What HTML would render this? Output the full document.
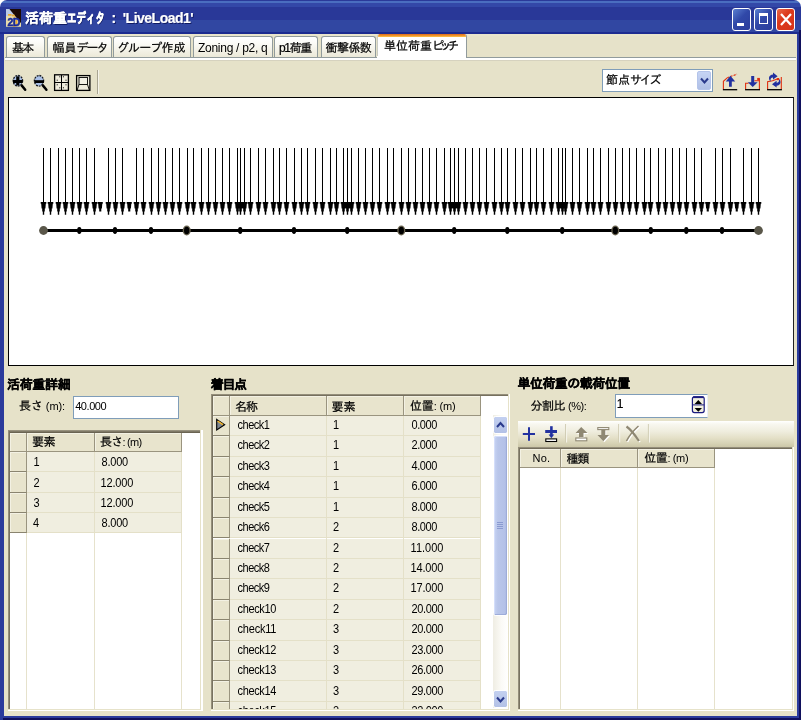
<!DOCTYPE html><html lang="ja"><head><meta charset="utf-8"><title>活荷重エディタ</title><style>
html,body{margin:0;padding:0;}
body{width:801px;height:720px;overflow:hidden;background:#fff;font-family:"Liberation Sans","IPAGothic","Noto Sans CJK JP",sans-serif;font-size:12px;color:#000;}
#w{position:absolute;left:0;top:0;width:801px;height:720px;overflow:hidden;background:#e6e2c9;}
.a{position:absolute;}
.t{position:absolute;white-space:nowrap;line-height:14px;height:14px;-webkit-text-stroke:0.22px currentColor;}
.b{font-weight:bold;-webkit-text-stroke:0.2px currentColor;}
.l{font-size:11px;-webkit-text-stroke:0;}
.lr{transform:scaleY(1.12);}
.tab{position:absolute;top:36px;height:21px;box-sizing:border-box;border:1px solid #919b9c;border-bottom:none;border-radius:3px 3px 0 0;background:linear-gradient(#ffffff 0%,#fbfbf7 30%,#ece9d8 100%);}
.hd{position:absolute;box-sizing:border-box;background:#e8e4cd;border-right:1px solid #9a947f;border-bottom:1px solid #9a947f;box-shadow:inset 1px 1px 0 #f3f1e3;}
.cell{position:absolute;box-sizing:border-box;background:#f0eee0;border-right:1px solid #e4e0c8;border-bottom:1px solid #e4e0c8;}
.rh{position:absolute;box-sizing:border-box;background:#e8e4cd;border-right:1px solid #9a947f;border-bottom:1px solid #8a846f;box-shadow:inset 1px 1px 0 #f3f1e3;}
.vl{position:absolute;width:1px;background:#e6e2cc;}
</style></head><body><div id="w">
<div class="a" style="left:0;top:0;width:801px;height:8px;background:#fff"></div>
<div class="a" id="tb" style="left:0;top:0;width:801px;height:34px;border-radius:7px 7px 0 0;background:linear-gradient(#2a3a9a 0,#2a3a9a 1px,#4a6ec0 1px,#4a6ec0 3px,#3348a8 3px,#3348a8 7px,#293898 7px,#293898 20px,#3147a2 20px,#3147a2 32px,#1c2b90 32px);"></div>
<div class="a" style="left:0;top:34px;width:4px;height:686px;background:#2b3b9c"></div>
<div class="a" style="left:797px;top:34px;width:4px;height:686px;background:#2b3b9c"></div>
<div class="a" style="left:0;top:716px;width:801px;height:4px;background:#2b3b9c"></div>
<div class="a" style="left:799.2px;top:30px;width:2px;height:690px;background:#10105c"></div>
<div class="a" style="left:3px;top:718.1px;width:798px;height:2px;background:#10105c"></div>
<svg class="a" style="left:6px;top:9px" width="15" height="18" viewBox="0 0 15 18"><rect width="15" height="17.8" fill="#e7dcab"/><polygon points="0,0 4,0 8.5,5.5 6,7 0,7" fill="#b9c8e6"/><polygon points="3.4,0 15,0 15,14.2" fill="#1c0a06"/><rect x="2" y="5" width="3.6" height="1.7" fill="#f0ac28"/><rect x="6" y="5.6" width="2.6" height="1.7" fill="#f0ac28"/><rect x="8" y="7.6" width="1.2" height="1.2" fill="#f0ac28"/><rect x="9.6" y="11" width="1.7" height="4.4" fill="#f0ac28"/><rect x="7" y="16.6" width="2.5" height="1.2" fill="#f0ac28"/></svg>
<div class="a" style="left:731.5px;top:7.5px;width:19px;height:23px;box-sizing:border-box;border:1px solid #fff;border-radius:3px;background:linear-gradient(135deg,#5a7fd0 0%,#3048a8 45%,#2b3d9c 100%)"><div class="a" style="left:4px;top:14px;width:7px;height:3px;background:#fff"></div></div>
<div class="a" style="left:753.5px;top:7.5px;width:19px;height:23px;box-sizing:border-box;border:1px solid #fff;border-radius:3px;background:linear-gradient(135deg,#5a7fd0 0%,#3048a8 45%,#2b3d9c 100%)"><div class="a" style="left:4px;top:4px;width:9px;height:11px;box-sizing:border-box;border:1px solid #fff;border-top:3px solid #fff"></div></div>
<div class="a" style="left:775.5px;top:7.5px;width:19px;height:23px;box-sizing:border-box;border:1px solid #fff;border-radius:3px;background:linear-gradient(135deg,#e8694a 0%,#dc3a1c 40%,#d6341a 100%)"><svg class="a" style="left:2px;top:3px" width="14" height="15" viewBox="0 0 14 15"><path d="M2 2 L12 13 M12 2 L2 13" stroke="#fff" stroke-width="2.2" fill="none"/></svg></div>
<div class="a" style="left:4px;top:34px;width:793px;height:1.5px;background:#e9e5cc"></div>
<div class="a" style="left:5px;top:56.5px;width:791px;height:1px;background:#919b9c"></div>
<div class="a" style="left:5px;top:57.5px;width:791px;height:2px;background:#fff"></div>
<div class="a" style="left:5px;top:59.5px;width:791px;height:1px;background:#d6d2bf"></div>
<div class="tab" style="left:6px;width:38.5px"></div>
<div class="tab" style="left:46.5px;width:65.0px"></div>
<div class="tab" style="left:113px;width:77.5px"></div>
<div class="tab" style="left:192.5px;width:80.0px"></div>
<div class="tab" style="left:274px;width:44px"></div>
<div class="tab" style="left:320.5px;width:55.5px"></div>
<div class="a" style="left:376.5px;top:33.5px;width:90.3px;height:23.2px;box-sizing:border-box;border-right:1px solid #919b9c;border-left:1px solid #c9ccc4;border-radius:2.5px 2.5px 0 0;background:#fff;overflow:hidden"><div class="a" style="left:-1px;top:0;width:92px;height:3px;background:linear-gradient(#dc6a1e 0%,#ec8c28 45%,#fcc848 100%)"></div></div><div class="a" style="left:377.2px;top:56.2px;width:88.8px;height:2px;background:#fff"></div>
<svg class="a" style="left:0;top:60px" width="110" height="40" viewBox="0 60 110 40"><path d="M21.6 85.4 L25.2 89.8" stroke="#000" stroke-width="2.5" stroke-linecap="round"/><ellipse cx="17.9" cy="80.8" rx="4.7" ry="5.3" fill="#a8bfe6" stroke="#15181f" stroke-width="1.3" stroke-dasharray="2 0.9"/><rect x="13" y="80" width="9.4" height="3" fill="#000"/><rect x="16.2" y="76.4" width="3.2" height="9" fill="#000"/><path d="M42.8 85.4 L46.4 89.8" stroke="#000" stroke-width="2.5" stroke-linecap="round"/><ellipse cx="39" cy="80.8" rx="4.6" ry="5.3" fill="#a8bfe6" stroke="#15181f" stroke-width="1.3" stroke-dasharray="2 0.9"/><rect x="34.4" y="80.2" width="9.5" height="2.8" fill="#000"/><rect x="54.6" y="74.8" width="13.8" height="15.6" fill="#efecdd" stroke="#000" stroke-width="1.3"/><path d="M61.5 75 V90 M55 82.5 H68.5" stroke="#000" stroke-width="1"/><rect x="59.3" y="76.3" width="1" height="1" fill="#000"/><rect x="62.9" y="76.3" width="1" height="1" fill="#000"/><rect x="56.7" y="79.7" width="1" height="1" fill="#000"/><rect x="65.5" y="79.7" width="1" height="1" fill="#000"/><rect x="56.7" y="84.3" width="1" height="1" fill="#000"/><rect x="65.5" y="84.3" width="1" height="1" fill="#000"/><rect x="59.3" y="87.3" width="1" height="1" fill="#000"/><rect x="62.9" y="87.3" width="1" height="1" fill="#000"/><rect x="76.6" y="75.6" width="13.3" height="14.8" fill="#efecdd" stroke="#000" stroke-width="1.3"/><rect x="79" y="77.5" width="8.5" height="7" fill="#f2f0e4" stroke="#000" stroke-width="0.9"/><path d="M79 84.5 L77.2 90 M87.5 84.5 L89.3 90" stroke="#000" stroke-width="0.9"/><path d="M97.5 70 V94" stroke="#a9a592" stroke-width="1"/><path d="M98.5 70 V94" stroke="#f6f4ea" stroke-width="1"/></svg>
<div class="a" style="left:602px;top:69px;width:111px;height:23px;box-sizing:border-box;border:1px solid #7f9db9;background:#fff"></div>
<div class="a" style="left:696.5px;top:71px;width:14.5px;height:19px;box-sizing:border-box;border:1px solid #b4c4ea;border-radius:2px;background:linear-gradient(#c6d4f4,#b0c0e6)"><svg class="a" style="left:2px;top:5px" width="9" height="8" viewBox="0 0 9 8"><path d="M1 1.5 L4.5 5.5 L8 1.5" stroke="#2a3a8c" stroke-width="2" fill="none"/></svg></div>
<svg class="a" style="left:716px;top:66px" width="74" height="30" viewBox="716 66 74 30"><path d="M723.4 89.4 V81.3 L727.2 77.8" stroke="#e03010" stroke-width="1.1" fill="none"/><path d="M727.2 77.8 L737 74.1" stroke="#e03010" stroke-width="1.1" stroke-dasharray="2.2 1.2" fill="none"/><path d="M730.4 75.8 L735.2 81.4 H731.8 V86.8 H729 V81.4 H725.8 Z" fill="#2231a0"/><path d="M722.9 89.7 H737.2" stroke="#000" stroke-width="1.3"/><path d="M745.6 89.4 V83.2 H748.6 M754.4 80.8 H759.4 M759.4 78.4 V89.4" stroke="#e03010" stroke-width="1.1" fill="none"/><rect x="757.2" y="77.9" width="2.6" height="2.4" fill="#e03010"/><path d="M751.2 76 H754.2 V82.2 H757.7 L752.7 87 L747.8 82.2 H751.2 Z" fill="#2231a0"/><path d="M745.1 89.7 H760" stroke="#000" stroke-width="1.3"/><path d="M767.6 89.4 V81.8 L772.5 80.8 L775.2 79.8 L778 78.8 M781.3 77.1 V89.4" stroke="#e03010" stroke-width="1.1" fill="none"/><rect x="776.8" y="78" width="2.4" height="2.2" fill="#e03010"/><path d="M773 72.6 L777.6 76.2 L773 79.6 V77.6 C771 77.6 770.2 79.2 770.6 81.4 C768 79.4 768.4 74.9 773 74.6 Z" fill="#2231a0"/><path d="M776.6 87.6 L772 84.2 L776.6 80.8 V82.8 C778.6 82.8 779.4 81.2 779 79 C781.4 81 781.2 85.4 776.6 85.7 Z" fill="#2231a0"/><path d="M767.1 89.7 H781.9" stroke="#000" stroke-width="1.3"/></svg>
<div class="a" style="left:8px;top:97px;width:786px;height:268.5px;box-sizing:border-box;border:1px solid #000;border-right-color:#222;background:#fff"></div>
<svg class="a" style="left:0;top:0" width="801" height="720" viewBox="0 0 801 720"><path d="M43 148h1v53.9h2.3v1.9h-.5l-.4 4.7h-.6v3.1h-.6v3.2h-1.4v-3.2h-.6v-3.1h-.6l-.4 -4.7h-.5v-1.9h2.3zM50 148h1v53.9h2.3v1.9h-.5l-.4 4.7h-.6v3.1h-.6v3.2h-1.4v-3.2h-.6v-3.1h-.6l-.4 -4.7h-.5v-1.9h2.3zM58 148h1v53.9h2.3v1.9h-.5l-.4 4.7h-.6v3.1h-.6v3.2h-1.4v-3.2h-.6v-3.1h-.6l-.4 -4.7h-.5v-1.9h2.3zM65 148h1v53.9h2.3v1.9h-.5l-.4 4.7h-.6v3.1h-.6v3.2h-1.4v-3.2h-.6v-3.1h-.6l-.4 -4.7h-.5v-1.9h2.3zM72 148h1v53.9h2.3v1.9h-.5l-.4 4.7h-.6v3.1h-.6v3.2h-1.4v-3.2h-.6v-3.1h-.6l-.4 -4.7h-.5v-1.9h2.3zM79 148h1v53.9h2.3v1.9h-.5l-.4 4.7h-.6v3.1h-.6v3.2h-1.4v-3.2h-.6v-3.1h-.6l-.4 -4.7h-.5v-1.9h2.3zM86 148h1v53.9h2.3v1.9h-.5l-.4 4.7h-.6v3.1h-.6v3.2h-1.4v-3.2h-.6v-3.1h-.6l-.4 -4.7h-.5v-1.9h2.3zM94 148h1v53.9h2.3v1.9h-.5l-.4 4.7h-.6v3.1h-.6v3.2h-1.4v-3.2h-.6v-3.1h-.6l-.4 -4.7h-.5v-1.9h2.3zM108 148h1v53.9h2.3v1.9h-.5l-.4 4.7h-.6v3.1h-.6v3.2h-1.4v-3.2h-.6v-3.1h-.6l-.4 -4.7h-.5v-1.9h2.3zM115 148h1v53.9h2.3v1.9h-.5l-.4 4.7h-.6v3.1h-.6v3.2h-1.4v-3.2h-.6v-3.1h-.6l-.4 -4.7h-.5v-1.9h2.3zM122 148h1v53.9h2.3v1.9h-.5l-.4 4.7h-.6v3.1h-.6v3.2h-1.4v-3.2h-.6v-3.1h-.6l-.4 -4.7h-.5v-1.9h2.3zM136 148h1v53.9h2.3v1.9h-.5l-.4 4.7h-.6v3.1h-.6v3.2h-1.4v-3.2h-.6v-3.1h-.6l-.4 -4.7h-.5v-1.9h2.3zM143 148h1v53.9h2.3v1.9h-.5l-.4 4.7h-.6v3.1h-.6v3.2h-1.4v-3.2h-.6v-3.1h-.6l-.4 -4.7h-.5v-1.9h2.3zM151 148h1v53.9h2.3v1.9h-.5l-.4 4.7h-.6v3.1h-.6v3.2h-1.4v-3.2h-.6v-3.1h-.6l-.4 -4.7h-.5v-1.9h2.3zM158 148h1v53.9h2.3v1.9h-.5l-.4 4.7h-.6v3.1h-.6v3.2h-1.4v-3.2h-.6v-3.1h-.6l-.4 -4.7h-.5v-1.9h2.3zM165 148h1v53.9h2.3v1.9h-.5l-.4 4.7h-.6v3.1h-.6v3.2h-1.4v-3.2h-.6v-3.1h-.6l-.4 -4.7h-.5v-1.9h2.3zM172 148h1v53.9h2.3v1.9h-.5l-.4 4.7h-.6v3.1h-.6v3.2h-1.4v-3.2h-.6v-3.1h-.6l-.4 -4.7h-.5v-1.9h2.3zM179 148h1v53.9h2.3v1.9h-.5l-.4 4.7h-.6v3.1h-.6v3.2h-1.4v-3.2h-.6v-3.1h-.6l-.4 -4.7h-.5v-1.9h2.3zM187 148h1v53.9h2.3v1.9h-.5l-.4 4.7h-.6v3.1h-.6v3.2h-1.4v-3.2h-.6v-3.1h-.6l-.4 -4.7h-.5v-1.9h2.3zM193 148h1v53.9h2.3v1.9h-.5l-.4 4.7h-.6v3.1h-.6v3.2h-1.4v-3.2h-.6v-3.1h-.6l-.4 -4.7h-.5v-1.9h2.3zM201 148h1v53.9h2.3v1.9h-.5l-.4 4.7h-.6v3.1h-.6v3.2h-1.4v-3.2h-.6v-3.1h-.6l-.4 -4.7h-.5v-1.9h2.3zM208 148h1v53.9h2.3v1.9h-.5l-.4 4.7h-.6v3.1h-.6v3.2h-1.4v-3.2h-.6v-3.1h-.6l-.4 -4.7h-.5v-1.9h2.3zM215 148h1v53.9h2.3v1.9h-.5l-.4 4.7h-.6v3.1h-.6v3.2h-1.4v-3.2h-.6v-3.1h-.6l-.4 -4.7h-.5v-1.9h2.3zM222 148h1v53.9h2.3v1.9h-.5l-.4 4.7h-.6v3.1h-.6v3.2h-1.4v-3.2h-.6v-3.1h-.6l-.4 -4.7h-.5v-1.9h2.3zM229 148h1v53.9h2.3v1.9h-.5l-.4 4.7h-.6v3.1h-.6v3.2h-1.4v-3.2h-.6v-3.1h-.6l-.4 -4.7h-.5v-1.9h2.3zM237 148h1v53.9h2.3v1.9h-.5l-.4 4.7h-.6v3.1h-.6v3.2h-1.4v-3.2h-.6v-3.1h-.6l-.4 -4.7h-.5v-1.9h2.3zM240 148h1v53.9h2.3v1.9h-.5l-.4 4.7h-.6v3.1h-.6v3.2h-1.4v-3.2h-.6v-3.1h-.6l-.4 -4.7h-.5v-1.9h2.3zM244 148h1v53.9h2.3v1.9h-.5l-.4 4.7h-.6v3.1h-.6v3.2h-1.4v-3.2h-.6v-3.1h-.6l-.4 -4.7h-.5v-1.9h2.3zM250 148h1v53.9h2.3v1.9h-.5l-.4 4.7h-.6v3.1h-.6v3.2h-1.4v-3.2h-.6v-3.1h-.6l-.4 -4.7h-.5v-1.9h2.3zM258 148h1v53.9h2.3v1.9h-.5l-.4 4.7h-.6v3.1h-.6v3.2h-1.4v-3.2h-.6v-3.1h-.6l-.4 -4.7h-.5v-1.9h2.3zM265 148h1v53.9h2.3v1.9h-.5l-.4 4.7h-.6v3.1h-.6v3.2h-1.4v-3.2h-.6v-3.1h-.6l-.4 -4.7h-.5v-1.9h2.3zM273 148h1v53.9h2.3v1.9h-.5l-.4 4.7h-.6v3.1h-.6v3.2h-1.4v-3.2h-.6v-3.1h-.6l-.4 -4.7h-.5v-1.9h2.3zM279 148h1v53.9h2.3v1.9h-.5l-.4 4.7h-.6v3.1h-.6v3.2h-1.4v-3.2h-.6v-3.1h-.6l-.4 -4.7h-.5v-1.9h2.3zM286 148h1v53.9h2.3v1.9h-.5l-.4 4.7h-.6v3.1h-.6v3.2h-1.4v-3.2h-.6v-3.1h-.6l-.4 -4.7h-.5v-1.9h2.3zM294 148h1v53.9h2.3v1.9h-.5l-.4 4.7h-.6v3.1h-.6v3.2h-1.4v-3.2h-.6v-3.1h-.6l-.4 -4.7h-.5v-1.9h2.3zM301 148h1v53.9h2.3v1.9h-.5l-.4 4.7h-.6v3.1h-.6v3.2h-1.4v-3.2h-.6v-3.1h-.6l-.4 -4.7h-.5v-1.9h2.3zM307 148h1v53.9h2.3v1.9h-.5l-.4 4.7h-.6v3.1h-.6v3.2h-1.4v-3.2h-.6v-3.1h-.6l-.4 -4.7h-.5v-1.9h2.3zM315 148h1v53.9h2.3v1.9h-.5l-.4 4.7h-.6v3.1h-.6v3.2h-1.4v-3.2h-.6v-3.1h-.6l-.4 -4.7h-.5v-1.9h2.3zM322 148h1v53.9h2.3v1.9h-.5l-.4 4.7h-.6v3.1h-.6v3.2h-1.4v-3.2h-.6v-3.1h-.6l-.4 -4.7h-.5v-1.9h2.3zM330 148h1v53.9h2.3v1.9h-.5l-.4 4.7h-.6v3.1h-.6v3.2h-1.4v-3.2h-.6v-3.1h-.6l-.4 -4.7h-.5v-1.9h2.3zM336 148h1v53.9h2.3v1.9h-.5l-.4 4.7h-.6v3.1h-.6v3.2h-1.4v-3.2h-.6v-3.1h-.6l-.4 -4.7h-.5v-1.9h2.3zM343 148h1v53.9h2.3v1.9h-.5l-.4 4.7h-.6v3.1h-.6v3.2h-1.4v-3.2h-.6v-3.1h-.6l-.4 -4.7h-.5v-1.9h2.3zM347 148h1v53.9h2.3v1.9h-.5l-.4 4.7h-.6v3.1h-.6v3.2h-1.4v-3.2h-.6v-3.1h-.6l-.4 -4.7h-.5v-1.9h2.3zM351 148h1v53.9h2.3v1.9h-.5l-.4 4.7h-.6v3.1h-.6v3.2h-1.4v-3.2h-.6v-3.1h-.6l-.4 -4.7h-.5v-1.9h2.3zM358 148h1v53.9h2.3v1.9h-.5l-.4 4.7h-.6v3.1h-.6v3.2h-1.4v-3.2h-.6v-3.1h-.6l-.4 -4.7h-.5v-1.9h2.3zM365 148h1v53.9h2.3v1.9h-.5l-.4 4.7h-.6v3.1h-.6v3.2h-1.4v-3.2h-.6v-3.1h-.6l-.4 -4.7h-.5v-1.9h2.3zM372 148h1v53.9h2.3v1.9h-.5l-.4 4.7h-.6v3.1h-.6v3.2h-1.4v-3.2h-.6v-3.1h-.6l-.4 -4.7h-.5v-1.9h2.3zM379 148h1v53.9h2.3v1.9h-.5l-.4 4.7h-.6v3.1h-.6v3.2h-1.4v-3.2h-.6v-3.1h-.6l-.4 -4.7h-.5v-1.9h2.3zM387 148h1v53.9h2.3v1.9h-.5l-.4 4.7h-.6v3.1h-.6v3.2h-1.4v-3.2h-.6v-3.1h-.6l-.4 -4.7h-.5v-1.9h2.3zM393 148h1v53.9h2.3v1.9h-.5l-.4 4.7h-.6v3.1h-.6v3.2h-1.4v-3.2h-.6v-3.1h-.6l-.4 -4.7h-.5v-1.9h2.3zM401 148h1v53.9h2.3v1.9h-.5l-.4 4.7h-.6v3.1h-.6v3.2h-1.4v-3.2h-.6v-3.1h-.6l-.4 -4.7h-.5v-1.9h2.3zM408 148h1v53.9h2.3v1.9h-.5l-.4 4.7h-.6v3.1h-.6v3.2h-1.4v-3.2h-.6v-3.1h-.6l-.4 -4.7h-.5v-1.9h2.3zM415 148h1v53.9h2.3v1.9h-.5l-.4 4.7h-.6v3.1h-.6v3.2h-1.4v-3.2h-.6v-3.1h-.6l-.4 -4.7h-.5v-1.9h2.3zM422 148h1v53.9h2.3v1.9h-.5l-.4 4.7h-.6v3.1h-.6v3.2h-1.4v-3.2h-.6v-3.1h-.6l-.4 -4.7h-.5v-1.9h2.3zM429 148h1v53.9h2.3v1.9h-.5l-.4 4.7h-.6v3.1h-.6v3.2h-1.4v-3.2h-.6v-3.1h-.6l-.4 -4.7h-.5v-1.9h2.3zM436 148h1v53.9h2.3v1.9h-.5l-.4 4.7h-.6v3.1h-.6v3.2h-1.4v-3.2h-.6v-3.1h-.6l-.4 -4.7h-.5v-1.9h2.3zM444 148h1v53.9h2.3v1.9h-.5l-.4 4.7h-.6v3.1h-.6v3.2h-1.4v-3.2h-.6v-3.1h-.6l-.4 -4.7h-.5v-1.9h2.3zM450 148h1v53.9h2.3v1.9h-.5l-.4 4.7h-.6v3.1h-.6v3.2h-1.4v-3.2h-.6v-3.1h-.6l-.4 -4.7h-.5v-1.9h2.3zM454 148h1v53.9h2.3v1.9h-.5l-.4 4.7h-.6v3.1h-.6v3.2h-1.4v-3.2h-.6v-3.1h-.6l-.4 -4.7h-.5v-1.9h2.3zM458 148h1v53.9h2.3v1.9h-.5l-.4 4.7h-.6v3.1h-.6v3.2h-1.4v-3.2h-.6v-3.1h-.6l-.4 -4.7h-.5v-1.9h2.3zM465 148h1v53.9h2.3v1.9h-.5l-.4 4.7h-.6v3.1h-.6v3.2h-1.4v-3.2h-.6v-3.1h-.6l-.4 -4.7h-.5v-1.9h2.3zM472 148h1v53.9h2.3v1.9h-.5l-.4 4.7h-.6v3.1h-.6v3.2h-1.4v-3.2h-.6v-3.1h-.6l-.4 -4.7h-.5v-1.9h2.3zM479 148h1v53.9h2.3v1.9h-.5l-.4 4.7h-.6v3.1h-.6v3.2h-1.4v-3.2h-.6v-3.1h-.6l-.4 -4.7h-.5v-1.9h2.3zM486 148h1v53.9h2.3v1.9h-.5l-.4 4.7h-.6v3.1h-.6v3.2h-1.4v-3.2h-.6v-3.1h-.6l-.4 -4.7h-.5v-1.9h2.3zM494 148h1v53.9h2.3v1.9h-.5l-.4 4.7h-.6v3.1h-.6v3.2h-1.4v-3.2h-.6v-3.1h-.6l-.4 -4.7h-.5v-1.9h2.3zM501 148h1v53.9h2.3v1.9h-.5l-.4 4.7h-.6v3.1h-.6v3.2h-1.4v-3.2h-.6v-3.1h-.6l-.4 -4.7h-.5v-1.9h2.3zM507 148h1v53.9h2.3v1.9h-.5l-.4 4.7h-.6v3.1h-.6v3.2h-1.4v-3.2h-.6v-3.1h-.6l-.4 -4.7h-.5v-1.9h2.3zM515 148h1v53.9h2.3v1.9h-.5l-.4 4.7h-.6v3.1h-.6v3.2h-1.4v-3.2h-.6v-3.1h-.6l-.4 -4.7h-.5v-1.9h2.3zM522 148h1v53.9h2.3v1.9h-.5l-.4 4.7h-.6v3.1h-.6v3.2h-1.4v-3.2h-.6v-3.1h-.6l-.4 -4.7h-.5v-1.9h2.3zM530 148h1v53.9h2.3v1.9h-.5l-.4 4.7h-.6v3.1h-.6v3.2h-1.4v-3.2h-.6v-3.1h-.6l-.4 -4.7h-.5v-1.9h2.3zM536 148h1v53.9h2.3v1.9h-.5l-.4 4.7h-.6v3.1h-.6v3.2h-1.4v-3.2h-.6v-3.1h-.6l-.4 -4.7h-.5v-1.9h2.3zM543 148h1v53.9h2.3v1.9h-.5l-.4 4.7h-.6v3.1h-.6v3.2h-1.4v-3.2h-.6v-3.1h-.6l-.4 -4.7h-.5v-1.9h2.3zM551 148h1v53.9h2.3v1.9h-.5l-.4 4.7h-.6v3.1h-.6v3.2h-1.4v-3.2h-.6v-3.1h-.6l-.4 -4.7h-.5v-1.9h2.3zM558 148h1v53.9h2.3v1.9h-.5l-.4 4.7h-.6v3.1h-.6v3.2h-1.4v-3.2h-.6v-3.1h-.6l-.4 -4.7h-.5v-1.9h2.3zM562 148h1v53.9h2.3v1.9h-.5l-.4 4.7h-.6v3.1h-.6v3.2h-1.4v-3.2h-.6v-3.1h-.6l-.4 -4.7h-.5v-1.9h2.3zM565 148h1v53.9h2.3v1.9h-.5l-.4 4.7h-.6v3.1h-.6v3.2h-1.4v-3.2h-.6v-3.1h-.6l-.4 -4.7h-.5v-1.9h2.3zM572 148h1v53.9h2.3v1.9h-.5l-.4 4.7h-.6v3.1h-.6v3.2h-1.4v-3.2h-.6v-3.1h-.6l-.4 -4.7h-.5v-1.9h2.3zM579 148h1v53.9h2.3v1.9h-.5l-.4 4.7h-.6v3.1h-.6v3.2h-1.4v-3.2h-.6v-3.1h-.6l-.4 -4.7h-.5v-1.9h2.3zM587 148h1v53.9h2.3v1.9h-.5l-.4 4.7h-.6v3.1h-.6v3.2h-1.4v-3.2h-.6v-3.1h-.6l-.4 -4.7h-.5v-1.9h2.3zM593 148h1v53.9h2.3v1.9h-.5l-.4 4.7h-.6v3.1h-.6v3.2h-1.4v-3.2h-.6v-3.1h-.6l-.4 -4.7h-.5v-1.9h2.3zM600 148h1v53.9h2.3v1.9h-.5l-.4 4.7h-.6v3.1h-.6v3.2h-1.4v-3.2h-.6v-3.1h-.6l-.4 -4.7h-.5v-1.9h2.3zM608 148h1v53.9h2.3v1.9h-.5l-.4 4.7h-.6v3.1h-.6v3.2h-1.4v-3.2h-.6v-3.1h-.6l-.4 -4.7h-.5v-1.9h2.3zM615 148h1v53.9h2.3v1.9h-.5l-.4 4.7h-.6v3.1h-.6v3.2h-1.4v-3.2h-.6v-3.1h-.6l-.4 -4.7h-.5v-1.9h2.3zM622 148h1v53.9h2.3v1.9h-.5l-.4 4.7h-.6v3.1h-.6v3.2h-1.4v-3.2h-.6v-3.1h-.6l-.4 -4.7h-.5v-1.9h2.3zM629 148h1v53.9h2.3v1.9h-.5l-.4 4.7h-.6v3.1h-.6v3.2h-1.4v-3.2h-.6v-3.1h-.6l-.4 -4.7h-.5v-1.9h2.3zM636 148h1v53.9h2.3v1.9h-.5l-.4 4.7h-.6v3.1h-.6v3.2h-1.4v-3.2h-.6v-3.1h-.6l-.4 -4.7h-.5v-1.9h2.3zM644 148h1v53.9h2.3v1.9h-.5l-.4 4.7h-.6v3.1h-.6v3.2h-1.4v-3.2h-.6v-3.1h-.6l-.4 -4.7h-.5v-1.9h2.3zM650 148h1v53.9h2.3v1.9h-.5l-.4 4.7h-.6v3.1h-.6v3.2h-1.4v-3.2h-.6v-3.1h-.6l-.4 -4.7h-.5v-1.9h2.3zM658 148h1v53.9h2.3v1.9h-.5l-.4 4.7h-.6v3.1h-.6v3.2h-1.4v-3.2h-.6v-3.1h-.6l-.4 -4.7h-.5v-1.9h2.3zM665 148h1v53.9h2.3v1.9h-.5l-.4 4.7h-.6v3.1h-.6v3.2h-1.4v-3.2h-.6v-3.1h-.6l-.4 -4.7h-.5v-1.9h2.3zM672 148h1v53.9h2.3v1.9h-.5l-.4 4.7h-.6v3.1h-.6v3.2h-1.4v-3.2h-.6v-3.1h-.6l-.4 -4.7h-.5v-1.9h2.3zM679 148h1v53.9h2.3v1.9h-.5l-.4 4.7h-.6v3.1h-.6v3.2h-1.4v-3.2h-.6v-3.1h-.6l-.4 -4.7h-.5v-1.9h2.3zM686 148h1v53.9h2.3v1.9h-.5l-.4 4.7h-.6v3.1h-.6v3.2h-1.4v-3.2h-.6v-3.1h-.6l-.4 -4.7h-.5v-1.9h2.3zM694 148h1v53.9h2.3v1.9h-.5l-.4 4.7h-.6v3.1h-.6v3.2h-1.4v-3.2h-.6v-3.1h-.6l-.4 -4.7h-.5v-1.9h2.3zM701 148h1v53.9h2.3v1.9h-.5l-.4 4.7h-.6v3.1h-.6v3.2h-1.4v-3.2h-.6v-3.1h-.6l-.4 -4.7h-.5v-1.9h2.3zM715 148h1v53.9h2.3v1.9h-.5l-.4 4.7h-.6v3.1h-.6v3.2h-1.4v-3.2h-.6v-3.1h-.6l-.4 -4.7h-.5v-1.9h2.3zM722 148h1v53.9h2.3v1.9h-.5l-.4 4.7h-.6v3.1h-.6v3.2h-1.4v-3.2h-.6v-3.1h-.6l-.4 -4.7h-.5v-1.9h2.3zM730 148h1v53.9h2.3v1.9h-.5l-.4 4.7h-.6v3.1h-.6v3.2h-1.4v-3.2h-.6v-3.1h-.6l-.4 -4.7h-.5v-1.9h2.3zM743 148h1v53.9h2.3v1.9h-.5l-.4 4.7h-.6v3.1h-.6v3.2h-1.4v-3.2h-.6v-3.1h-.6l-.4 -4.7h-.5v-1.9h2.3zM751 148h1v53.9h2.3v1.9h-.5l-.4 4.7h-.6v3.1h-.6v3.2h-1.4v-3.2h-.6v-3.1h-.6l-.4 -4.7h-.5v-1.9h2.3zM758 148h1v53.9h2.3v1.9h-.5l-.4 4.7h-.6v3.1h-.6v3.2h-1.4v-3.2h-.6v-3.1h-.6l-.4 -4.7h-.5v-1.9h2.3zM97.7 201.9h5.1v1.9h-.5l-.4 4.7h-.6v3.1h-2.1v-3.1h-.6l-.4 -4.7h-.5zM126.7 201.9h5.1v1.9h-.5l-.4 4.7h-.6v3.1h-2.1v-3.1h-.6l-.4 -4.7h-.5zM705.2 201.9h5.1v1.9h-.5l-.4 4.7h-.6v3.1h-2.1v-3.1h-.6l-.4 -4.7h-.5zM734.2 201.9h5.1v1.9h-.5l-.4 4.7h-.6v3.1h-2.1v-3.1h-.6l-.4 -4.7h-.5z" fill="#000"/><rect x="43.5" y="229" width="715" height="3" fill="#000"/><ellipse cx="79.3" cy="230.5" rx="2.2" ry="3.4" fill="#000"/><ellipse cx="115" cy="230.5" rx="2.2" ry="3.4" fill="#000"/><ellipse cx="151" cy="230.5" rx="2.2" ry="3.4" fill="#000"/><ellipse cx="240.2" cy="230.5" rx="2.2" ry="3.4" fill="#000"/><ellipse cx="294" cy="230.5" rx="2.2" ry="3.4" fill="#000"/><ellipse cx="347.2" cy="230.5" rx="2.2" ry="3.4" fill="#000"/><ellipse cx="454.2" cy="230.5" rx="2.2" ry="3.4" fill="#000"/><ellipse cx="507.3" cy="230.5" rx="2.2" ry="3.4" fill="#000"/><ellipse cx="562.2" cy="230.5" rx="2.2" ry="3.4" fill="#000"/><ellipse cx="650.8" cy="230.5" rx="2.2" ry="3.4" fill="#000"/><ellipse cx="686.3" cy="230.5" rx="2.2" ry="3.4" fill="#000"/><ellipse cx="722" cy="230.5" rx="2.2" ry="3.4" fill="#000"/><circle cx="43.5" cy="230.5" r="4.4" fill="#5a574a"/><circle cx="758.5" cy="230.5" r="4.4" fill="#5a574a"/><ellipse cx="186.7" cy="230.5" rx="4" ry="5" fill="#6a6450"/><ellipse cx="186.7" cy="230.5" rx="2.7" ry="3.8" fill="#000"/><ellipse cx="401.3" cy="230.5" rx="4" ry="5" fill="#6a6450"/><ellipse cx="401.3" cy="230.5" rx="2.7" ry="3.8" fill="#000"/><ellipse cx="615.3" cy="230.5" rx="4" ry="5" fill="#6a6450"/><ellipse cx="615.3" cy="230.5" rx="2.7" ry="3.8" fill="#000"/></svg>
<div class="a" style="left:73px;top:396px;width:106px;height:23px;box-sizing:border-box;border:1px solid #7f9db9;background:#fff"></div>
<div class="a" style="left:8.1px;top:430.1px;width:194.5px;height:280.9px;background:#fff"></div>
<div class="a" style="left:8.1px;top:430.1px;width:193.1px;height:279.5px;background:#e6e2c9"></div>
<div class="a" style="left:8.1px;top:430.1px;width:192.4px;height:278.79999999999995px;background:linear-gradient(#a39d89,#6a6452 2.3999999999999773px)"></div>
<div class="a" style="left:8.1px;top:430.90000000000003px;width:2.0px;height:278.0px;background:linear-gradient(90deg,#a39d89,#6a6452)"></div>
<div class="a" id="g1" style="left:10.1px;top:432.5px;width:190.4px;height:276.4px;background:#fff;overflow:hidden">
<div class="vl" style="left:16.0px;top:0;height:278.5px"></div>
<div class="vl" style="left:83.9px;top:0;height:278.5px"></div>
<div class="vl" style="left:170.9px;top:0;height:278.5px"></div>
<div class="hd" style="left:0.0px;top:0;width:17.0px;height:19.2px"></div>
<div class="hd" style="left:17.0px;top:0;width:67.9px;height:19.2px"></div>
<div class="hd" style="left:84.9px;top:0;width:87px;height:19.2px"></div>
<div class="rh" style="left:0.0px;top:19.2px;width:17.0px;height:20.45px"></div>
<div class="cell" style="left:17.0px;top:19.2px;width:67.9px;height:20.45px"></div>
<div class="cell" style="left:84.9px;top:19.2px;width:87px;height:20.45px"></div>
<div class="rh" style="left:0.0px;top:39.65px;width:17.0px;height:20.45px"></div>
<div class="cell" style="left:17.0px;top:39.65px;width:67.9px;height:20.45px"></div>
<div class="cell" style="left:84.9px;top:39.65px;width:87px;height:20.45px"></div>
<div class="rh" style="left:0.0px;top:60.099999999999994px;width:17.0px;height:20.45px"></div>
<div class="cell" style="left:17.0px;top:60.099999999999994px;width:67.9px;height:20.45px"></div>
<div class="cell" style="left:84.9px;top:60.099999999999994px;width:87px;height:20.45px"></div>
<div class="rh" style="left:0.0px;top:80.55px;width:17.0px;height:20.45px"></div>
<div class="cell" style="left:17.0px;top:80.55px;width:67.9px;height:20.45px"></div>
<div class="cell" style="left:84.9px;top:80.55px;width:87px;height:20.45px"></div>
</div>
<div class="a" style="left:211.4px;top:394.3px;width:299.0px;height:316.7px;background:#fff"></div>
<div class="a" style="left:211.4px;top:394.3px;width:297.6px;height:315.3px;background:#e6e2c9"></div>
<div class="a" style="left:211.4px;top:394.3px;width:296.9px;height:314.59999999999997px;background:linear-gradient(#a39d89,#6a6452 1.8999999999999773px)"></div>
<div class="a" style="left:211.4px;top:395.1px;width:1.799999999999983px;height:313.8px;background:linear-gradient(90deg,#a39d89,#6a6452)"></div>
<div class="a" id="g2" style="left:213.2px;top:396.2px;width:295.09999999999997px;height:312.7px;background:#fff;overflow:hidden">
<div class="vl" style="left:15.900000000000006px;top:0;height:314.8px"></div>
<div class="vl" style="left:112.80000000000001px;top:0;height:314.8px"></div>
<div class="vl" style="left:189.8px;top:0;height:314.8px"></div>
<div class="vl" style="left:266.90000000000003px;top:0;height:314.8px"></div>
<div class="hd" style="left:0.0px;top:0;width:16.900000000000006px;height:19.8px"></div>
<div class="hd" style="left:16.900000000000006px;top:0;width:96.9px;height:19.8px"></div>
<div class="hd" style="left:113.80000000000001px;top:0;width:77px;height:19.8px"></div>
<div class="hd" style="left:190.8px;top:0;width:77.10000000000002px;height:19.8px"></div>
<div class="rh" style="left:0.0px;top:19.8px;width:16.900000000000006px;height:20.42px"></div>
<div class="cell" style="left:16.900000000000006px;top:19.8px;width:96.9px;height:20.42px"></div>
<div class="cell" style="left:113.80000000000001px;top:19.8px;width:77px;height:20.42px"></div>
<div class="cell" style="left:190.8px;top:19.8px;width:77.10000000000002px;height:20.42px"></div>
<div class="rh" style="left:0.0px;top:40.22px;width:16.900000000000006px;height:20.42px"></div>
<div class="cell" style="left:16.900000000000006px;top:40.22px;width:96.9px;height:20.42px"></div>
<div class="cell" style="left:113.80000000000001px;top:40.22px;width:77px;height:20.42px"></div>
<div class="cell" style="left:190.8px;top:40.22px;width:77.10000000000002px;height:20.42px"></div>
<div class="rh" style="left:0.0px;top:60.64px;width:16.900000000000006px;height:20.42px"></div>
<div class="cell" style="left:16.900000000000006px;top:60.64px;width:96.9px;height:20.42px"></div>
<div class="cell" style="left:113.80000000000001px;top:60.64px;width:77px;height:20.42px"></div>
<div class="cell" style="left:190.8px;top:60.64px;width:77.10000000000002px;height:20.42px"></div>
<div class="rh" style="left:0.0px;top:81.06px;width:16.900000000000006px;height:20.42px"></div>
<div class="cell" style="left:16.900000000000006px;top:81.06px;width:96.9px;height:20.42px"></div>
<div class="cell" style="left:113.80000000000001px;top:81.06px;width:77px;height:20.42px"></div>
<div class="cell" style="left:190.8px;top:81.06px;width:77.10000000000002px;height:20.42px"></div>
<div class="rh" style="left:0.0px;top:101.48px;width:16.900000000000006px;height:20.42px"></div>
<div class="cell" style="left:16.900000000000006px;top:101.48px;width:96.9px;height:20.42px"></div>
<div class="cell" style="left:113.80000000000001px;top:101.48px;width:77px;height:20.42px"></div>
<div class="cell" style="left:190.8px;top:101.48px;width:77.10000000000002px;height:20.42px"></div>
<div class="rh" style="left:0.0px;top:121.9px;width:16.900000000000006px;height:20.42px"></div>
<div class="cell" style="left:16.900000000000006px;top:121.9px;width:96.9px;height:20.42px"></div>
<div class="cell" style="left:113.80000000000001px;top:121.9px;width:77px;height:20.42px"></div>
<div class="cell" style="left:190.8px;top:121.9px;width:77.10000000000002px;height:20.42px"></div>
<div class="rh" style="left:0.0px;top:142.32000000000002px;width:16.900000000000006px;height:20.42px"></div>
<div class="cell" style="left:16.900000000000006px;top:142.32000000000002px;width:96.9px;height:20.42px"></div>
<div class="cell" style="left:113.80000000000001px;top:142.32000000000002px;width:77px;height:20.42px"></div>
<div class="cell" style="left:190.8px;top:142.32000000000002px;width:77.10000000000002px;height:20.42px"></div>
<div class="rh" style="left:0.0px;top:162.74px;width:16.900000000000006px;height:20.42px"></div>
<div class="cell" style="left:16.900000000000006px;top:162.74px;width:96.9px;height:20.42px"></div>
<div class="cell" style="left:113.80000000000001px;top:162.74px;width:77px;height:20.42px"></div>
<div class="cell" style="left:190.8px;top:162.74px;width:77.10000000000002px;height:20.42px"></div>
<div class="rh" style="left:0.0px;top:183.16000000000003px;width:16.900000000000006px;height:20.42px"></div>
<div class="cell" style="left:16.900000000000006px;top:183.16000000000003px;width:96.9px;height:20.42px"></div>
<div class="cell" style="left:113.80000000000001px;top:183.16000000000003px;width:77px;height:20.42px"></div>
<div class="cell" style="left:190.8px;top:183.16000000000003px;width:77.10000000000002px;height:20.42px"></div>
<div class="rh" style="left:0.0px;top:203.58000000000004px;width:16.900000000000006px;height:20.42px"></div>
<div class="cell" style="left:16.900000000000006px;top:203.58000000000004px;width:96.9px;height:20.42px"></div>
<div class="cell" style="left:113.80000000000001px;top:203.58000000000004px;width:77px;height:20.42px"></div>
<div class="cell" style="left:190.8px;top:203.58000000000004px;width:77.10000000000002px;height:20.42px"></div>
<div class="rh" style="left:0.0px;top:224.00000000000003px;width:16.900000000000006px;height:20.42px"></div>
<div class="cell" style="left:16.900000000000006px;top:224.00000000000003px;width:96.9px;height:20.42px"></div>
<div class="cell" style="left:113.80000000000001px;top:224.00000000000003px;width:77px;height:20.42px"></div>
<div class="cell" style="left:190.8px;top:224.00000000000003px;width:77.10000000000002px;height:20.42px"></div>
<div class="rh" style="left:0.0px;top:244.42000000000002px;width:16.900000000000006px;height:20.42px"></div>
<div class="cell" style="left:16.900000000000006px;top:244.42000000000002px;width:96.9px;height:20.42px"></div>
<div class="cell" style="left:113.80000000000001px;top:244.42000000000002px;width:77px;height:20.42px"></div>
<div class="cell" style="left:190.8px;top:244.42000000000002px;width:77.10000000000002px;height:20.42px"></div>
<div class="rh" style="left:0.0px;top:264.84000000000003px;width:16.900000000000006px;height:20.42px"></div>
<div class="cell" style="left:16.900000000000006px;top:264.84000000000003px;width:96.9px;height:20.42px"></div>
<div class="cell" style="left:113.80000000000001px;top:264.84000000000003px;width:77px;height:20.42px"></div>
<div class="cell" style="left:190.8px;top:264.84000000000003px;width:77.10000000000002px;height:20.42px"></div>
<div class="rh" style="left:0.0px;top:285.26000000000005px;width:16.900000000000006px;height:20.42px"></div>
<div class="cell" style="left:16.900000000000006px;top:285.26000000000005px;width:96.9px;height:20.42px"></div>
<div class="cell" style="left:113.80000000000001px;top:285.26000000000005px;width:77px;height:20.42px"></div>
<div class="cell" style="left:190.8px;top:285.26000000000005px;width:77.10000000000002px;height:20.42px"></div>
<div class="rh" style="left:0.0px;top:305.68px;width:16.900000000000006px;height:20.42px"></div>
<div class="cell" style="left:16.900000000000006px;top:305.68px;width:96.9px;height:20.42px"></div>
<div class="cell" style="left:113.80000000000001px;top:305.68px;width:77px;height:20.42px"></div>
<div class="cell" style="left:190.8px;top:305.68px;width:77.10000000000002px;height:20.42px"></div>
<svg class="a" style="left:0.8000000000000114px;top:20.80000000000001px" width="14" height="16" viewBox="214 417 14 16"><path d="M216.7 419.4 L224.6 424.7 L216.7 429.9 Z" fill="#7f8790" stroke="#000" stroke-width="1.15" stroke-linejoin="miter"/><path d="M217.6 421 L223 424.6" stroke="#f8b828" stroke-width="1.5"/></svg>
<div class="a" style="left:279.8px;top:19.30000000000001px;width:15.5px;height:293px;background:linear-gradient(90deg,#efede3,#fbfaf6 55%,#fff)"></div>
<div class="a" style="left:279.8px;top:19.80000000000001px;width:15px;height:18px;box-sizing:border-box;border:1px solid #fff;border-radius:2.5px;background:linear-gradient(#c3d0f0,#b3c1e6)"><svg class="a" style="left:2px;top:4px" width="9" height="8" viewBox="0 0 9 8"><path d="M1 6 L4.5 2 L8 6" stroke="#2a3a8c" stroke-width="2" fill="none"/></svg></div>
<div class="a" style="left:279.8px;top:39.30000000000001px;width:15px;height:181px;box-sizing:border-box;border:1px solid #fff;border-radius:2.5px;background:linear-gradient(90deg,#c8d4f4,#b9c6ea 30%,#b5c2e8 80%,#a9b7e0);box-shadow:inset -1px -1px 0 #9dacd9, inset 1px 1px 0 #d4defa"><div class="a" style="left:3.5px;top:86px;width:6px;height:1px;background:#8a9ad0;box-shadow:0 2px 0 #8a9ad0,0 4px 0 #8a9ad0,0 6px 0 #8a9ad0"></div></div>
<div class="a" style="left:279.8px;top:293.8px;width:15px;height:18px;box-sizing:border-box;border:1px solid #fff;border-radius:2.5px;background:linear-gradient(#c3d0f0,#b3c1e6)"><svg class="a" style="left:2px;top:5px" width="9" height="8" viewBox="0 0 9 8"><path d="M1 1.5 L4.5 5.5 L8 1.5" stroke="#2a3a8c" stroke-width="2" fill="none"/></svg></div>
</div>
<div class="a" style="left:615px;top:394.2px;width:93px;height:24px;box-sizing:border-box;border:1px solid #7f9db9;border-right-color:#e9eef5;background:#fff"></div>
<svg class="a" style="left:690px;top:394px" width="17" height="22" viewBox="690 394 17 22"><rect x="692.4" y="396.8" width="11.8" height="15.8" rx="2" fill="#f1efdf" stroke="#1c1c80" stroke-width="1.2"/><path d="M693 397.2 H703.6" stroke="#1c1c80" stroke-width="1.8"/><path d="M692.4 404.9 H704.2" stroke="#1c1c80" stroke-width="1"/><path d="M694.6 403.9 L698.3 400 L702 403.9 Z M694.6 407.9 L698.3 411.7 L702 407.9 Z" fill="#000"/></svg>
<div class="a" style="left:518px;top:421px;width:276.2px;height:26.2px;background:linear-gradient(#ffffff 0%,#f8f7ef 12%,#efedde 40%,#e4e0c8 65%,#d7d3b6 85%,#ccc7a8 100%)"></div>
<svg class="a" style="left:510px;top:415px" width="150" height="35" viewBox="510 415 150 35"><path d="M529 427.2 V440.8 M522.8 434 H535" stroke="#2231a0" stroke-width="2"/><path d="M545.2 431.5 H557" stroke="#2231a0" stroke-width="3"/><path d="M551.4 426.2 V436" stroke="#2231a0" stroke-width="2.6"/><path d="M548.6 434.6 H554.2 L551.4 438.2 Z" fill="#2231a0"/><rect x="545.8" y="438.9" width="10.8" height="2.6" fill="#fff" stroke="#000" stroke-width="1.1"/><path d="M565.6 424 V442.5" stroke="#cfcbb2" stroke-width="1"/><path d="M566.6 424 V442.5" stroke="#f6f5ec" stroke-width="1"/><path d="M618.7 424 V442.5" stroke="#cfcbb2" stroke-width="1"/><path d="M619.7 424 V442.5" stroke="#f6f5ec" stroke-width="1"/><path d="M648.4 424 V442.5" stroke="#cfcbb2" stroke-width="1"/><path d="M649.4 424 V442.5" stroke="#f6f5ec" stroke-width="1"/><path d="M582.2 427.9 L588.5 434 H584.5 V438 H580 V434 H576.6 Z" fill="#fff"/><path d="M581.2 426.9 L587.5 433 H583.5 V437 H579 V433 H575.6 Z" fill="#8f8873"/><rect x="575.8" y="438" width="11" height="2.8" fill="#fff" stroke="#8f8873" stroke-width="1.1"/><rect x="597.8" y="427.6" width="11" height="2" fill="#fff" stroke="#8f8873" stroke-width="1.1"/><path d="M602.3 431 H606.3 V436 H610 L604.3 442.2 L598.5 436 H602.3 Z" fill="#fff"/><path d="M601.3 430 H605.3 V435 H609 L603.3 441.2 L597.5 435 H601.3 Z" fill="#8f8873"/><path d="M627.5 427.5 C631 430 636 436 640 442 M639.5 427 C635 431 630 437 627.5 442" stroke="#fff" stroke-width="1.6" fill="none"/><path d="M626.5 426.5 C630 429 635 435 639 441" stroke="#8f8873" stroke-width="2.2" fill="none"/><path d="M638.5 426 C634 430 629 436 626.5 441" stroke="#8f8873" stroke-width="1.5" fill="none"/></svg>
<div class="a" style="left:518.4px;top:447.1px;width:275.70000000000005px;height:263.9px;background:#fff"></div>
<div class="a" style="left:518.4px;top:447.1px;width:274.30000000000007px;height:262.5px;background:#e6e2c9"></div>
<div class="a" style="left:518.4px;top:447.1px;width:273.6px;height:261.79999999999995px;background:linear-gradient(#a39d89,#6a6452 1.7999999999999545px)"></div>
<div class="a" style="left:518.4px;top:447.90000000000003px;width:1.7000000000000455px;height:261.0px;background:linear-gradient(90deg,#a39d89,#6a6452)"></div>
<div class="a" id="g3" style="left:520.1px;top:448.9px;width:271.9px;height:260.0px;background:#fff;overflow:hidden">
<div class="vl" style="left:39.69999999999993px;top:0;height:262.1px"></div>
<div class="vl" style="left:117.29999999999995px;top:0;height:262.1px"></div>
<div class="vl" style="left:193.89999999999998px;top:0;height:262.1px"></div>
<div class="hd" style="left:0.0px;top:0;width:40.69999999999993px;height:18.8px"></div>
<div class="hd" style="left:40.69999999999993px;top:0;width:77.60000000000002px;height:18.8px"></div>
<div class="hd" style="left:118.29999999999995px;top:0;width:76.60000000000002px;height:18.8px"></div>
</div>
<div class="a" id="tx" style="left:0;top:0;width:801px;height:720px;will-change:transform"><div class="t b" style="left:7.6px;top:16.8px;font-size:10.5px;line-height:10px;color:#1a2a98;letter-spacing:-0.6px;-webkit-text-stroke:0.5px #1a2a98">2D</div>
<div class="t b" id="title" style="left:25.00px;top:8.90px;letter-spacing:0.000px;font-size:14px;line-height:18px;height:18px;color:#fff;text-shadow:1px 1px 0 #101a60;word-spacing:2.6px">活荷重<span style="display:inline-block;transform:scaleX(.68);transform-origin:0 0;margin-right:-17.9px;-webkit-text-stroke:0.7px #fff">エディタ</span> : <span style="letter-spacing:-0.5px">'LiveLoad1'</span></div>
<div class="t " id="tab0" style="left:12.00px;top:40.50px;letter-spacing:-1.800px;">基本</div>
<div class="t " id="tab1" style="left:52.40px;top:40.50px;letter-spacing:0.000px;">幅員<span style="letter-spacing:-1.800px">データ</span></div>
<div class="t " id="tab2" style="left:117.00px;top:40.50px;letter-spacing:0.000px;"><span style="letter-spacing:-0.900px">グループ</span>作成</div>
<div class="t " id="tab3" style="left:198.00px;top:40.50px;letter-spacing:-0.277px;-webkit-text-stroke:0;">Zoning / p2, q</div>
<div class="t " id="tab4" style="left:279.00px;top:40.50px;letter-spacing:-1.350px;">p1荷重</div>
<div class="t " id="tab5" style="left:325.60px;top:40.50px;letter-spacing:-0.600px;">衝撃係数</div>
<div class="t " id="tab6" style="left:384.00px;top:38.90px;letter-spacing:0.000px;">単位荷重<span style="letter-spacing:-4.500px">ピッチ</span></div>
<div class="t " id="combo" style="left:606.00px;top:73.00px;letter-spacing:0.000px;">節点<span style="letter-spacing:-2.250px">サイズ</span></div>
<div class="t b" id="h1" style="left:7.00px;top:377.50px;letter-spacing:-0.337px;font-size:13px">活荷重詳細</div>
<div class="t " id="l1" style="left:19.00px;top:398.75px;letter-spacing:-0.075px;">長さ<span class="l"> (m):</span></div>
<div class="t l" id="v1" style="left:75.20px;top:399.20px;letter-spacing:-0.450px;">40.000</div>
<div class="t " id="g1h1" style="left:32.00px;top:435.45px;letter-spacing:-0.450px;">要素</div>
<div class="t " id="g1h2" style="left:100.00px;top:434.95px;letter-spacing:-0.750px;">長さ<span class="l">: (m)</span></div>
<div class="t l lr" id="g1r0a" style="left:33.50px;top:455.00px;letter-spacing:0.000px;">1</div>
<div class="t l lr" id="g1r0b" style="left:101.60px;top:455.00px;letter-spacing:-0.225px;">8.000</div>
<div class="t l lr" id="g1r1a" style="left:33.50px;top:475.50px;letter-spacing:0.000px;">2</div>
<div class="t l lr" id="g1r1b" style="left:100.60px;top:475.50px;letter-spacing:-0.180px;">12.000</div>
<div class="t l lr" id="g1r2a" style="left:33.50px;top:495.50px;letter-spacing:0.000px;">3</div>
<div class="t l lr" id="g1r2b" style="left:100.60px;top:495.50px;letter-spacing:-0.180px;">12.000</div>
<div class="t l lr" id="g1r3a" style="left:33.00px;top:516.00px;letter-spacing:0.000px;">4</div>
<div class="t l lr" id="g1r3b" style="left:101.60px;top:516.00px;letter-spacing:-0.225px;">8.000</div>
<div class="t b" id="h2" style="left:210.80px;top:377.50px;letter-spacing:-1.350px;font-size:13px">着目点</div>
<div class="t " id="g2h1" style="left:235.00px;top:399.50px;letter-spacing:-0.900px;">名称</div>
<div class="t " id="g2h2" style="left:331.40px;top:399.50px;letter-spacing:0.000px;">要素</div>
<div class="t " id="g2h3" style="left:410.00px;top:399.00px;letter-spacing:-0.150px;">位置<span class="l">: (m)</span></div>
<div class="a" style="left:0;top:0;width:801px;height:708.9px;overflow:hidden">
<div class="t l lr" id="g2r0a" style="left:237.60px;top:418.00px;letter-spacing:-0.540px;">check1</div>
<div class="t l lr" id="g2r0b" style="left:332.90px;top:418.00px;letter-spacing:0.000px;">1</div>
<div class="t l lr" id="g2r0c" style="left:411.60px;top:418.00px;letter-spacing:-0.450px;">0.000</div>
<div class="t l lr" id="g2r1a" style="left:237.60px;top:438.00px;letter-spacing:-0.540px;">check2</div>
<div class="t l lr" id="g2r1b" style="left:332.90px;top:438.00px;letter-spacing:0.000px;">1</div>
<div class="t l lr" id="g2r1c" style="left:411.60px;top:438.00px;letter-spacing:-0.450px;">2.000</div>
<div class="t l lr" id="g2r2a" style="left:237.60px;top:458.50px;letter-spacing:-0.540px;">check3</div>
<div class="t l lr" id="g2r2b" style="left:332.90px;top:458.50px;letter-spacing:0.000px;">1</div>
<div class="t l lr" id="g2r2c" style="left:411.60px;top:458.50px;letter-spacing:-0.450px;">4.000</div>
<div class="t l lr" id="g2r3a" style="left:237.60px;top:479.00px;letter-spacing:-0.540px;">check4</div>
<div class="t l lr" id="g2r3b" style="left:332.90px;top:479.00px;letter-spacing:0.000px;">1</div>
<div class="t l lr" id="g2r3c" style="left:411.60px;top:479.00px;letter-spacing:-0.450px;">6.000</div>
<div class="t l lr" id="g2r4a" style="left:237.60px;top:499.50px;letter-spacing:-0.540px;">check5</div>
<div class="t l lr" id="g2r4b" style="left:332.90px;top:499.50px;letter-spacing:0.000px;">1</div>
<div class="t l lr" id="g2r4c" style="left:411.60px;top:499.50px;letter-spacing:-0.450px;">8.000</div>
<div class="t l lr" id="g2r5a" style="left:237.60px;top:520.00px;letter-spacing:-0.540px;">check6</div>
<div class="t l lr" id="g2r5b" style="left:332.90px;top:520.00px;letter-spacing:0.000px;">2</div>
<div class="t l lr" id="g2r5c" style="left:411.60px;top:520.00px;letter-spacing:-0.450px;">8.000</div>
<div class="t l lr" id="g2r6a" style="left:237.60px;top:540.50px;letter-spacing:-0.540px;">check7</div>
<div class="t l lr" id="g2r6b" style="left:332.90px;top:540.50px;letter-spacing:0.000px;">2</div>
<div class="t l lr" id="g2r6c" style="left:410.60px;top:540.50px;letter-spacing:0.000px;">11.000</div>
<div class="t l lr" id="g2r7a" style="left:237.60px;top:560.50px;letter-spacing:-0.540px;">check8</div>
<div class="t l lr" id="g2r7b" style="left:332.90px;top:560.50px;letter-spacing:0.000px;">2</div>
<div class="t l lr" id="g2r7c" style="left:410.60px;top:560.50px;letter-spacing:-0.180px;">14.000</div>
<div class="t l lr" id="g2r8a" style="left:237.60px;top:581.00px;letter-spacing:-0.540px;">check9</div>
<div class="t l lr" id="g2r8b" style="left:332.90px;top:581.00px;letter-spacing:0.000px;">2</div>
<div class="t l lr" id="g2r8c" style="left:410.60px;top:581.00px;letter-spacing:-0.180px;">17.000</div>
<div class="t l lr" id="g2r9a" style="left:237.60px;top:601.50px;letter-spacing:-0.375px;">check10</div>
<div class="t l lr" id="g2r9b" style="left:332.90px;top:601.50px;letter-spacing:0.000px;">2</div>
<div class="t l lr" id="g2r9c" style="left:411.60px;top:601.50px;letter-spacing:-0.360px;">20.000</div>
<div class="t l lr" id="g2r10a" style="left:237.60px;top:622.00px;letter-spacing:-0.225px;">check11</div>
<div class="t l lr" id="g2r10b" style="left:332.90px;top:622.00px;letter-spacing:0.000px;">3</div>
<div class="t l lr" id="g2r10c" style="left:411.60px;top:622.00px;letter-spacing:-0.360px;">20.000</div>
<div class="t l lr" id="g2r11a" style="left:237.60px;top:642.50px;letter-spacing:-0.375px;">check12</div>
<div class="t l lr" id="g2r11b" style="left:332.90px;top:642.50px;letter-spacing:0.000px;">3</div>
<div class="t l lr" id="g2r11c" style="left:411.60px;top:642.50px;letter-spacing:-0.360px;">23.000</div>
<div class="t l lr" id="g2r12a" style="left:237.60px;top:663.00px;letter-spacing:-0.375px;">check13</div>
<div class="t l lr" id="g2r12b" style="left:332.90px;top:663.00px;letter-spacing:0.000px;">3</div>
<div class="t l lr" id="g2r12c" style="left:411.60px;top:663.00px;letter-spacing:-0.360px;">26.000</div>
<div class="t l lr" id="g2r13a" style="left:237.60px;top:683.50px;letter-spacing:-0.375px;">check14</div>
<div class="t l lr" id="g2r13b" style="left:332.90px;top:683.50px;letter-spacing:0.000px;">3</div>
<div class="t l lr" id="g2r13c" style="left:411.60px;top:683.50px;letter-spacing:-0.360px;">29.000</div>
<div class="t l lr" id="g2r14a" style="left:237.60px;top:703.50px;letter-spacing:-0.375px;">check15</div>
<div class="t l lr" id="g2r14b" style="left:332.90px;top:703.50px;letter-spacing:0.000px;">3</div>
<div class="t l lr" id="g2r14c" style="left:411.60px;top:703.50px;letter-spacing:-0.360px;">32.000</div>
</div>
<div class="t b" id="h3" style="left:517.40px;top:377.00px;letter-spacing:-0.506px;font-size:13px">単位荷重の載荷位置</div>
<div class="t " id="l3" style="left:530.40px;top:398.75px;letter-spacing:-0.386px;">分割比<span class="l"> (%):</span></div>
<div class="t " id="v3" style="left:616.80px;top:397.30px;letter-spacing:0.000px;">1</div>
<div class="t l" id="g3h0" style="left:532.60px;top:450.50px;letter-spacing:0.225px;">No.</div>
<div class="t " id="g3h1" style="left:566.40px;top:451.60px;letter-spacing:-0.900px;">種類</div>
<div class="t " id="g3h2" style="left:644.20px;top:451.10px;letter-spacing:-0.375px;">位置<span class="l">: (m)</span></div></div>
</div></body></html>
